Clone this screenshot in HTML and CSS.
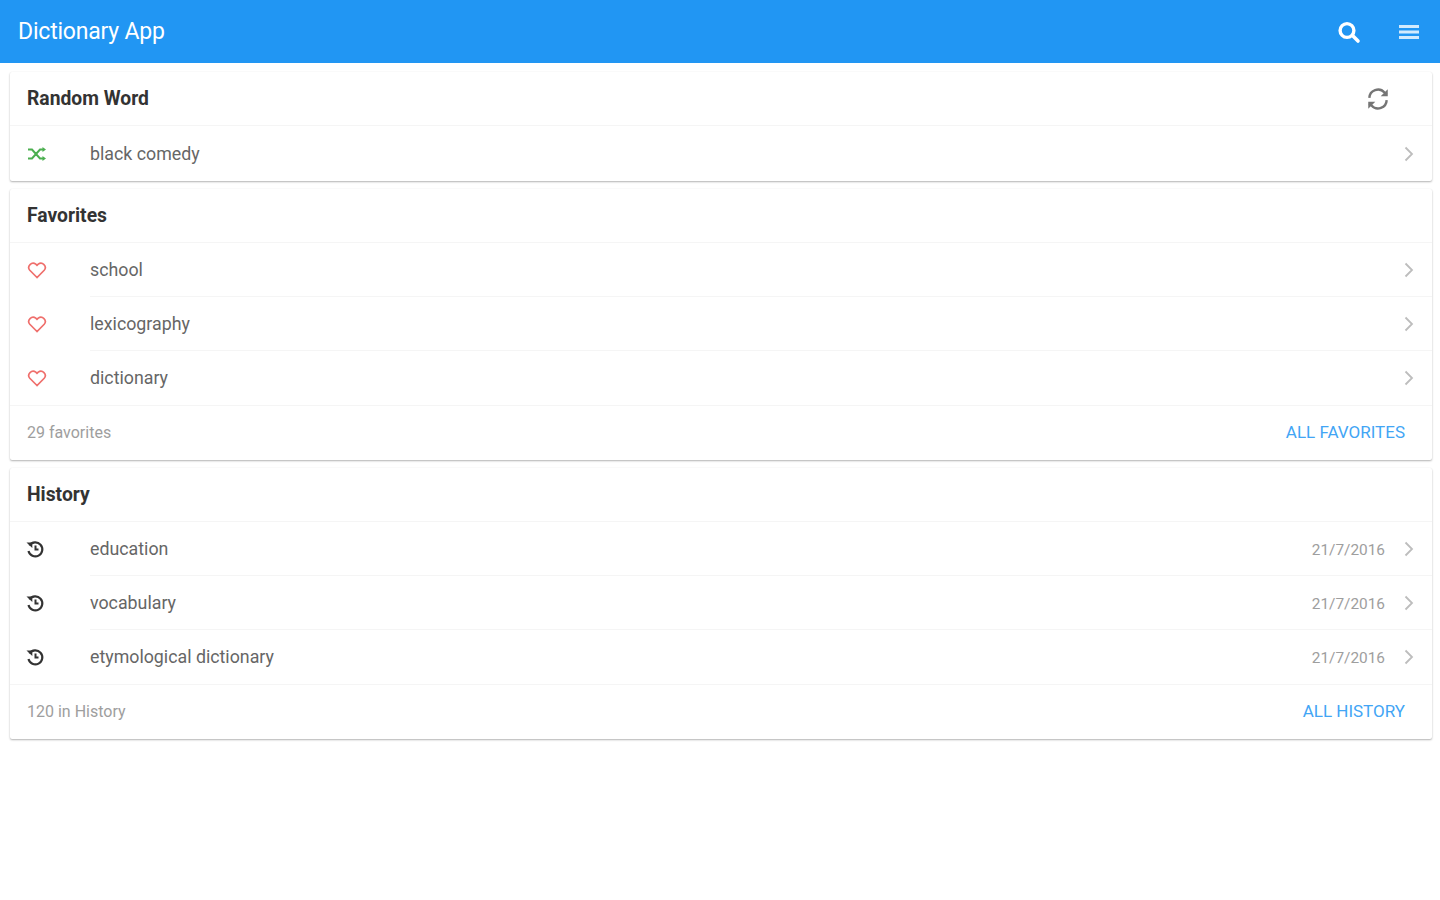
FILE: index.html
```html
<!DOCTYPE html>
<html lang="en">
<head>
<meta charset="utf-8">
<title>Dictionary App</title>
<link rel="stylesheet" href="styles.css">
</head>
<body>
<header class="toolbar">
  <h1 class="title">Dictionary App</h1>
  <div class="toolbar-actions">
    <svg class="tool-icon" viewBox="0 0 24 24" width="24" height="24"><circle cx="10" cy="10.500" r="6.900" fill="none" stroke="#fff" stroke-width="3.400"/><path d="M15.500 15.500 21 21" stroke="#fff" stroke-width="3.600" stroke-linecap="round"/></svg>
    <svg class="tool-icon" viewBox="0 0 24 24" width="24" height="24"><path d="M2 6.500h20M2 12h20M2 17.500h20" stroke="#fff" stroke-opacity=".8" stroke-width="3"/></svg>
  </div>
</header>
<main class="content">
  <section class="card">
    <div class="card-head">
      <h2 class="card-title">Random Word</h2>
      <svg class="refresh" viewBox="0 0 24 24" width="26" height="26"><path d="M4 11a8 8 0 0 1 14-5l2 2M20 13a8 8 0 0 1-14 5l-2-2" fill="none" stroke="#757575" stroke-width="2.200"/><path d="M21 3v6.500h-6.500zM3 21v-6.500h6.500z" fill="#757575"/></svg>
    </div>
    <div class="row tall">
      <svg class="lead" viewBox="0 0 20 20" width="20" height="20"><path d="M1 5.500h4l8 9h3M1 14.500h4l8-9h3" fill="none" stroke="#4caf50" stroke-width="2"/><path d="M15.500 3 19 5.500 15.500 8zM15.500 12 19 14.500 15.500 17z" fill="#4caf50"/></svg>
      <span class="word">black comedy</span>
      <svg class="chev" viewBox="0 0 10 16" width="10" height="16"><path d="M1.500 1.500 8 8l-6.500 6.500" fill="none" stroke="#bdbdbd" stroke-width="1.800"/></svg>
    </div>
  </section>
  <section class="card">
    <div class="card-head"><h2 class="card-title">Favorites</h2></div>
    <div class="row inset">
      <svg class="lead" viewBox="0 0 20 20" width="20" height="20"><path d="M10 17.500 2.800 10.300a4.300 4.300 0 0 1 6-6.100L10 5.400l1.200-1.200a4.300 4.300 0 0 1 6 6.100z" fill="none" stroke="#ef6f6c" stroke-width="1.700"/></svg>
      <span class="word">school</span>
      <svg class="chev" viewBox="0 0 10 16" width="10" height="16"><path d="M1.500 1.500 8 8l-6.500 6.500" fill="none" stroke="#bdbdbd" stroke-width="1.800"/></svg>
    </div>
    <div class="row inset">
      <svg class="lead" viewBox="0 0 20 20" width="20" height="20"><path d="M10 17.500 2.800 10.300a4.300 4.300 0 0 1 6-6.100L10 5.400l1.200-1.200a4.300 4.300 0 0 1 6 6.100z" fill="none" stroke="#ef6f6c" stroke-width="1.700"/></svg>
      <span class="word">lexicography</span>
      <svg class="chev" viewBox="0 0 10 16" width="10" height="16"><path d="M1.500 1.500 8 8l-6.500 6.500" fill="none" stroke="#bdbdbd" stroke-width="1.800"/></svg>
    </div>
    <div class="row">
      <svg class="lead" viewBox="0 0 20 20" width="20" height="20"><path d="M10 17.500 2.800 10.300a4.300 4.300 0 0 1 6-6.100L10 5.400l1.200-1.200a4.300 4.300 0 0 1 6 6.100z" fill="none" stroke="#ef6f6c" stroke-width="1.700"/></svg>
      <span class="word">dictionary</span>
      <svg class="chev" viewBox="0 0 10 16" width="10" height="16"><path d="M1.500 1.500 8 8l-6.500 6.500" fill="none" stroke="#bdbdbd" stroke-width="1.800"/></svg>
    </div>
    <div class="card-foot"><span class="count">29 favorites</span><a class="more">ALL FAVORITES</a></div>
  </section>
  <section class="card">
    <div class="card-head"><h2 class="card-title">History</h2></div>
    <div class="row inset">
      <svg class="lead" viewBox="0 0 20 20" width="20" height="20"><path d="M2.500 6.500A7 7 0 1 1 1.500 12" fill="none" stroke="#333" stroke-width="2.200"/><path d="M-.5 3.500h5.800v5.500z" fill="#333"/><path d="M8.500 6.500v4h3" fill="none" stroke="#333" stroke-width="2"/></svg>
      <span class="word">education</span>
      <span class="date">21/7/2016</span>
      <svg class="chev" viewBox="0 0 10 16" width="10" height="16"><path d="M1.500 1.500 8 8l-6.500 6.500" fill="none" stroke="#bdbdbd" stroke-width="1.800"/></svg>
    </div>
    <div class="row inset">
      <svg class="lead" viewBox="0 0 20 20" width="20" height="20"><path d="M2.500 6.500A7 7 0 1 1 1.500 12" fill="none" stroke="#333" stroke-width="2.200"/><path d="M-.5 3.500h5.800v5.500z" fill="#333"/><path d="M8.500 6.500v4h3" fill="none" stroke="#333" stroke-width="2"/></svg>
      <span class="word">vocabulary</span>
      <span class="date">21/7/2016</span>
      <svg class="chev" viewBox="0 0 10 16" width="10" height="16"><path d="M1.500 1.500 8 8l-6.500 6.500" fill="none" stroke="#bdbdbd" stroke-width="1.800"/></svg>
    </div>
    <div class="row">
      <svg class="lead" viewBox="0 0 20 20" width="20" height="20"><path d="M2.500 6.500A7 7 0 1 1 1.500 12" fill="none" stroke="#333" stroke-width="2.200"/><path d="M-.5 3.500h5.800v5.500z" fill="#333"/><path d="M8.500 6.500v4h3" fill="none" stroke="#333" stroke-width="2"/></svg>
      <span class="word">etymological dictionary</span>
      <span class="date">21/7/2016</span>
      <svg class="chev" viewBox="0 0 10 16" width="10" height="16"><path d="M1.500 1.500 8 8l-6.500 6.500" fill="none" stroke="#bdbdbd" stroke-width="1.800"/></svg>
    </div>
    <div class="card-foot"><span class="count">120 in History</span><a class="more">ALL HISTORY</a></div>
  </section>
</main>
</body>
</html>
```

FILE: styles.css
```css
* { box-sizing: border-box; }
html, body { margin: 0; padding: 0; background: #fff; }
body { font-family: Roboto, "Liberation Sans", sans-serif; height: 900px; overflow: hidden; }

.toolbar {
  height: 63px;
  background: #2196f3;
  display: flex;
  align-items: center;
  justify-content: space-between;
  padding: 0 19px 0 18px;
}
.title { margin: 0; font-size: 23px; font-weight: 400; color: #fff; letter-spacing: -0.2px; }
.toolbar-actions { display: flex; align-items: center; gap: 36px; }
.tool-icon { display: block; }

.content {
  padding: 9px 8px 0 10px;
  display: flex;
  flex-direction: column;
  gap: 8px;
}
.card {
  background: #fff;
  border-radius: 2px;
  box-shadow: 0 1px 2px rgba(0, 0, 0, .3), 0 0 1px rgba(0, 0, 0, .05);
}
.card-head {
  height: 54px;
  padding: 0 41px 0 17px;
  display: flex;
  align-items: center;
  justify-content: space-between;
  border-bottom: 1px solid #f5f5f5;
}
.card-title { margin: 0; font-size: 19.300px; font-weight: 700; color: #333; }
.refresh { display: block; }

.row {
  height: 54px;
  display: flex;
  align-items: center;
  padding: 0 18px 0 17px;
  position: relative;
}
.row.tall { height: 55px; }
.row.inset::after {
  content: "";
  position: absolute;
  left: 80px;
  right: 0;
  bottom: 0;
  height: 1px;
  background: #f5f5f5;
}
.lead { flex: none; display: block; overflow: visible; }
.word { margin: 0 0 1px 43px; flex: 1; font-size: 17.800px; color: #666; }
.date { font-size: 15.400px; color: #9e9e9e; margin: 2px 19px 0 0; }
.chev { flex: none; display: block; }

.card-foot {
  height: 55px;
  padding: 0 27px 0 17px;
  display: flex;
  align-items: center;
  justify-content: space-between;
  border-top: 1px solid #f5f5f5;
}
.count { font-size: 16px; color: #9e9e9e; margin-bottom: 2px; }
.more { font-size: 17px; color: #42a5f5; margin-bottom: 2px; }
```
